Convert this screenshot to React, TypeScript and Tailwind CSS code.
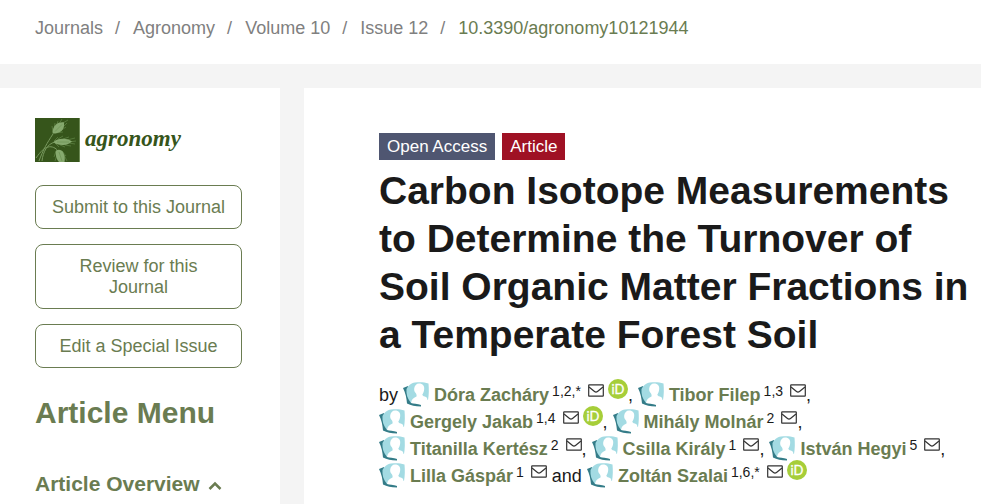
import { Fragment } from 'react';

const crumbs = ['Journals', 'Agronomy', 'Volume 10', 'Issue 12'];

const actions = ['Submit to this Journal', 'Review for this Journal', 'Edit a Special Issue'];

type Author = { name: string; refs: string; orcid?: boolean; after?: string };

const authors: Author[] = [
  { name: 'Dóra Zacháry', refs: '1,2,*', orcid: true, after: ',' },
  { name: 'Tibor Filep', refs: '1,3', after: ',' },
  { name: 'Gergely Jakab', refs: '1,4', orcid: true, after: ',' },
  { name: 'Mihály Molnár', refs: '2', after: ',' },
  { name: 'Titanilla Kertész', refs: '2', after: ',' },
  { name: 'Csilla Király', refs: '1', after: ',' },
  { name: 'István Hegyi', refs: '5', after: ',' },
  { name: 'Lilla Gáspár', refs: '1', after: ' and' },
  { name: 'Zoltán Szalai', refs: '1,6,*', orcid: true },
];

function WheatLogo() {
  return (
    <svg viewBox="0 0 45 44" className="h-11 w-[45px]" aria-hidden="true">
      <rect width="45" height="44" fill="#36551b" />
      <path d="M44.500 0v44" stroke="#6d8a55" />
      <g fill="none" stroke="#77985d" strokeWidth="1">
        <path d="M4 43C8 32 12 25 18 16" />
        <path d="M1 40C6 33 9 30 13 29C17 28 21 30 23 33" />
        <path d="M7 43C8 34 12 26 20 24" />
      </g>
      <g stroke="#5d8143" strokeWidth="0.8">
        <path d="M18 14l-1-6M19 12l1-7M21 9l2-6M24 6l3-5M20 15l8-1M25 13l6-4M28 9l4-4M28 5l5-3" />
        <path d="M19 23l4-4M23 21l5-3M28 21l6-2M32 22l8-2M20 25l4 4M25 27l5 2M30 27l6 1M34 25l6 1M34 24l7-1" />
        <path d="M21 33l-2 6M22 37l-2 6M27 33l4 5M29 37l3 6" />
      </g>
      <g fill="#86a96e">
        <path d="M17.500 15.500C17.500 12 18.500 8.500 21 6.500C23 5 26 4 29 4.500C29.500 8 28.500 11 26.500 13C24 15 20.500 15.500 17.500 15.500Z" />
        <path d="M18.500 24C21 21.500 25 20.500 28.500 20.800C32 21 35 22 37 23.500C34.500 25.500 32 26.800 28.500 27C24.500 27.200 21 26.500 18.500 24Z" />
        <path d="M21 32.500C24 31 27 32 28.500 35C30 38 30 41 29.500 44H24C21.500 41.500 20 36 21 32.500Z" />
      </g>
      <path d="M20 13.500l7-7M22 24h12M24 34l3 9" stroke="#6f9456" strokeWidth="0.8" />
    </svg>
  );
}

function PersonIcon() {
  return (
    <svg viewBox="0 0 26 26" className="relative -top-0.5 mr-[5px] inline-block size-[26px] align-middle" aria-hidden="true">
      <path d="M0 7L5 5L8 20L18 23.500L18 25.500C12 25.500 8 24.500 4 22.500C3.500 17 2.500 12 0 7Z" fill="#347c88" />
      <path d="M3.500 8C5 5 8 2 12 1.500C17 1 21 1 25.500 2.500C26 8 26 14 25 19C19 18.500 12 19 8 22C4.500 18 3 13 3.500 8Z" fill="#a3dbe3" />
      <path d="M16 2.500C20 2.500 21.500 5 21.200 8C21 11 20 12.500 19.300 13.500C19.500 15 21.500 15.500 23 16C24 16.500 24.500 18 24.500 20L18.500 24C14 23 10.500 22.500 8 22C8.500 18.500 10 17 13.500 15.500C13.800 14.500 13.500 13.500 13 12.500C11.500 11 11 9.500 11.200 7.500C11.500 4.500 13.500 2.500 16 2.500Z" fill="#fff" />
    </svg>
  );
}

function MailIcon() {
  return (
    <svg viewBox="0 0 16 13" className="inline-block h-[13px] w-4" fill="none" stroke="#333" strokeWidth="1.2" aria-hidden="true">
      <rect x="0.700" y="0.800" width="14.600" height="11.400" rx="0.500" />
      <path d="M1 3L6.500 7.500Q8 8.700 9.500 7.500L15 3" />
    </svg>
  );
}

function OrcidIcon() {
  return (
    <svg viewBox="0 0 20 20" className="inline-block size-5" aria-hidden="true">
      <circle cx="10" cy="10" r="10" fill="#a6ce39" />
      <text x="10" y="14.500" textAnchor="middle" fontSize="13" fill="#fff" stroke="#fff" strokeWidth="0.300" className="font-[Lato,sans-serif]">
        iD
      </text>
    </svg>
  );
}

function AuthorEntry({ author }: { author: Author }) {
  return (
    <span className="inline-block h-[27px] whitespace-nowrap">
      <PersonIcon />
      <a href="#" className="font-bold text-[#6a7c51]">{author.name}</a>
      <sup className="relative -top-[5px] ml-[3px] align-baseline text-sm leading-none">{author.refs}</sup>
      <a href="#" aria-label={`Email ${author.name}`} className="relative -top-[6px] ml-[7px]">
        <MailIcon />
      </a>
      {author.orcid && (
        <a href="#" aria-label={`ORCID of ${author.name}`} className="relative -top-[7px] ml-1">
          <OrcidIcon />
        </a>
      )}
      {author.after}
    </span>
  );
}

export default function App() {
  return (
    <div className="flex min-h-screen flex-col bg-[#f4f4f4] font-['Liberation_Sans',Arial,sans-serif] text-lg text-[#1a1a1a]">
      {/* Breadcrumb */}
      <nav className="bg-white px-[35px] pt-[14px] pb-[22px] leading-7 text-[#808080]" aria-label="Breadcrumb">
        {crumbs.map((crumb) => (
          <Fragment key={crumb}>
            <a href="#">{crumb}</a>
            <span className="mr-[13px] ml-3">/</span>
          </Fragment>
        ))}
        <a href="#" className="text-[#6a7c51]">10.3390/agronomy10121944</a>
      </nav>

      <div className="mt-6 flex flex-1 gap-6">
        {/* Sidebar */}
        <aside className="w-[280px] shrink-0 bg-white pt-[30px] pr-[38px] pl-[35px] text-[#6a7c51]">
          <a href="#" className="flex items-start gap-[5px]">
            <WheatLogo />
            <span className="font-['Liberation_Serif',serif] text-[23px] leading-[42px] font-bold text-[#36551b] italic">agronomy</span>
          </a>
          <div className="mt-[23px] flex flex-col gap-[15px]">
            {actions.map((action) => (
              <button key={action} type="button" className="rounded-lg border border-[#6a7c51] px-3 pt-[11px] pb-[10px] leading-[21px]">
                {action}
              </button>
            ))}
          </div>
          <h2 className="mt-[25px] text-[30px] leading-10 font-bold">Article Menu</h2>
          <button type="button" className="mt-[35px] flex items-center gap-2 text-[21px] leading-8 font-bold">
            Article Overview
            <svg viewBox="0 0 14 10" className="mt-1 h-[10px] w-[14px]" fill="none" stroke="currentColor" strokeWidth="2.500" aria-hidden="true">
              <path d="M1.500 8L7 2.500L12.500 8" />
            </svg>
          </button>
        </aside>

        {/* Article */}
        <main className="min-w-0 flex-1 bg-white pt-[45px] pr-1 pl-[75px]">
          <div className="flex gap-[7px] text-[17px] leading-[27px] text-white">
            <span className="bg-[#4f5671] px-2">Open Access</span>
            <span className="bg-[#9f1124] px-2">Article</span>
          </div>
          <h1 className="mt-[7px] text-[39px] leading-[48px] font-bold">
            Carbon Isotope Measurements to Determine the Turnover of Soil Organic Matter Fractions in a Temperate Forest Soil
          </h1>
          <div className="mt-[23px] leading-[27px]">
            by{' '}
            {authors.map((author) => (
              <Fragment key={author.name}>
                <AuthorEntry author={author} />{' '}
              </Fragment>
            ))}
          </div>
        </main>
      </div>
    </div>
  );
}
